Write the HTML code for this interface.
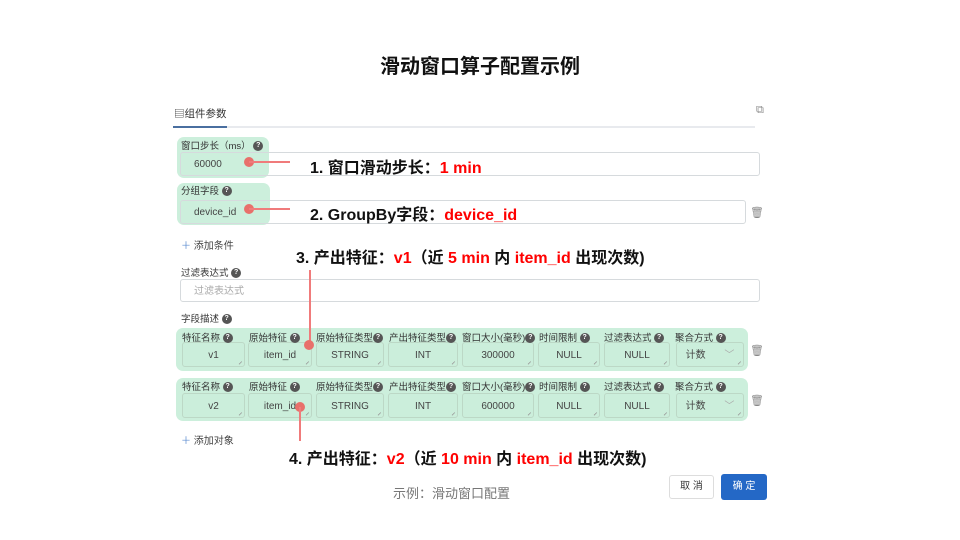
<!DOCTYPE html><html><head><meta charset="utf-8"><style>
body{margin:0;width:960px;height:540px;background:#fff;position:relative;font-family:"Liberation Sans","Noto Sans CJK SC",sans-serif;overflow:hidden}
.a{position:absolute}
.g{position:absolute;background:#ccefdc;border-radius:7px}
.in{position:absolute;border:1px solid #d6dadd;border-radius:3px;background:transparent;box-sizing:border-box;font-size:10px;color:#444}
.c{position:absolute;border:1px solid #bcd8c6;border-radius:3px;box-sizing:border-box;height:25px;top:0;font-size:10px;color:#444;text-align:center;line-height:25px;background:#cbeedb}
.lb{position:absolute;font-size:9.5px;color:#333;white-space:nowrap}
.q{display:inline-block;width:10px;height:10px;border-radius:50%;background:#555;color:#fff;font-size:7px;line-height:10px;text-align:center;vertical-align:middle;font-weight:bold}
.ann{position:absolute;font-size:16px;font-weight:bold;color:#111;white-space:nowrap}
.r{color:#f00}
.ln{position:absolute;background:#f07b7b}
.dot{position:absolute;width:10px;height:10px;border-radius:50%;background:#e8706b}
.row .c:after{content:"";position:absolute;right:2px;bottom:2px;width:5px;height:5px;border-right:1px solid #999;transform:rotate(45deg) scale(.8)}
</style></head><body>
<div class="a" style="left:0;width:960px;top:50px;text-align:center;font-size:20px;font-weight:bold;color:#111">滑动窗口算子配置示例</div>
<div class="a" style="left:174px;top:106px;font-size:10.5px;color:#333">▤组件参数</div>
<div class="a" style="left:173px;top:126px;width:582px;height:2px;background:#e8eaee"></div>
<div class="a" style="left:173px;top:126px;width:54px;height:2px;background:#4a6fa0"></div>
<div class="a" style="left:756px;top:104px;font-size:11px;color:#888">⧉</div>

<div class="g" style="left:177px;top:137px;width:92px;height:41px"></div>
<div class="lb" style="left:181px;top:138px">窗口步长（ms） <span class="q">?</span></div>
<div class="in" style="left:180px;top:152px;width:580px;height:24px;padding:5px 0 0 13px;line-height:14px">60000</div>
<div class="g" style="left:177px;top:183px;width:93px;height:42px"></div>
<div class="lb" style="left:181px;top:183px">分组字段 <span class="q">?</span></div>
<div class="in" style="left:180px;top:200px;width:566px;height:24px;padding:5px 0 0 13px;line-height:14px">device_id</div>
<div class="a" style="left:750px;top:206px;font-size:11px;color:#888">🗑</div>
<div class="a" style="left:181px;top:237px;font-size:10px;color:#444"><span style="color:#5b8bd0">＋</span> 添加条件</div>
<div class="lb" style="left:181px;top:265px">过滤表达式 <span class="q">?</span></div>
<div class="in" style="left:180px;top:279px;width:580px;height:23px;padding:5px 0 0 13px;line-height:14px;color:#aaa">过滤表达式</div>
<div class="lb" style="left:181px;top:311px">字段描述 <span class="q">?</span></div>

<div class="g" style="left:176px;top:328px;width:572px;height:43px"></div>
<div class="g" style="left:176px;top:378px;width:572px;height:43px"></div>
<div class="a row" style="left:0;top:342px;width:960px;height:25px">
<div class="c" style="left:182px;width:63px">v1</div><div class="c" style="left:248px;width:64px">item_id</div><div class="c" style="left:316px;width:68px">STRING</div><div class="c" style="left:388px;width:70px">INT</div><div class="c" style="left:462px;width:72px">300000</div><div class="c" style="left:538px;width:62px">NULL</div><div class="c" style="left:604px;width:66px">NULL</div><div class="c" style="left:676px;width:68px">计数 <span style="color:#aaa;margin-left:16px">﹀</span></div></div>
<div class="a row" style="left:0;top:393px;width:960px;height:25px">
<div class="c" style="left:182px;width:63px">v2</div><div class="c" style="left:248px;width:64px">item_id</div><div class="c" style="left:316px;width:68px">STRING</div><div class="c" style="left:388px;width:70px">INT</div><div class="c" style="left:462px;width:72px">600000</div><div class="c" style="left:538px;width:62px">NULL</div><div class="c" style="left:604px;width:66px">NULL</div><div class="c" style="left:676px;width:68px">计数 <span style="color:#aaa;margin-left:16px">﹀</span></div></div>
<div class="a" style="left:0;top:330px">
<div class="lb" style="left:182px">特征名称 <span class="q">?</span></div><div class="lb" style="left:249px">原始特征 <span class="q">?</span></div><div class="lb" style="left:316px">原始特征类型<span class="q">?</span></div><div class="lb" style="left:389px">产出特征类型<span class="q">?</span></div><div class="lb" style="left:462px">窗口大小(毫秒)<span class="q">?</span></div><div class="lb" style="left:539px">时间限制 <span class="q">?</span></div><div class="lb" style="left:604px">过滤表达式 <span class="q">?</span></div><div class="lb" style="left:675px">聚合方式 <span class="q">?</span></div></div>
<div class="a" style="left:0;top:379px">
<div class="lb" style="left:182px">特征名称 <span class="q">?</span></div><div class="lb" style="left:249px">原始特征 <span class="q">?</span></div><div class="lb" style="left:316px">原始特征类型<span class="q">?</span></div><div class="lb" style="left:389px">产出特征类型<span class="q">?</span></div><div class="lb" style="left:462px">窗口大小(毫秒)<span class="q">?</span></div><div class="lb" style="left:539px">时间限制 <span class="q">?</span></div><div class="lb" style="left:604px">过滤表达式 <span class="q">?</span></div><div class="lb" style="left:675px">聚合方式 <span class="q">?</span></div></div>
<div class="a" style="left:750px;top:344px;font-size:11px;color:#888">🗑</div>
<div class="a" style="left:750px;top:394px;font-size:11px;color:#888">🗑</div>
<div class="a" style="left:181px;top:432px;font-size:10px;color:#444"><span style="color:#5b8bd0">＋</span> 添加对象</div>

<div class="dot" style="left:244px;top:157px"></div><div class="ln" style="left:249px;top:161px;width:41px;height:2px"></div>
<div class="dot" style="left:244px;top:204px"></div><div class="ln" style="left:249px;top:208px;width:41px;height:2px"></div>
<div class="ln" style="left:309px;top:270px;width:2px;height:75px"></div><div class="dot" style="left:304px;top:340px"></div>
<div class="dot" style="left:295px;top:402px"></div><div class="ln" style="left:299px;top:407px;width:2px;height:34px"></div>
<div class="ann" style="left:310px;top:154px">1. 窗口滑动步长：<span class="r">1 min</span></div>
<div class="ann" style="left:310px;top:201px">2. GroupBy字段：<span class="r">device_id</span></div>
<div class="ann" style="left:296px;top:244px">3. 产出特征：<span class="r">v1</span>（近 <span class="r">5 min</span> 内 <span class="r">item_id</span> 出现次数)</div>
<div class="ann" style="left:289px;top:445px">4. 产出特征：<span class="r">v2</span>（近 <span class="r">10 min</span> 内 <span class="r">item_id</span> 出现次数)</div>
<div class="a" style="left:393px;top:483px;font-size:13px;color:#777">示例：滑动窗口配置</div>
<div class="a" style="left:669px;top:475px;width:45px;height:24px;border:1px solid #ddd;border-radius:3px;box-sizing:border-box;font-size:10px;text-align:center;line-height:22px;color:#333">取 消</div>
<div class="a" style="left:721px;top:474px;width:46px;height:26px;background:#2468c6;border-radius:3px;font-size:10px;text-align:center;line-height:26px;color:#fff">确 定</div>
</body></html>
